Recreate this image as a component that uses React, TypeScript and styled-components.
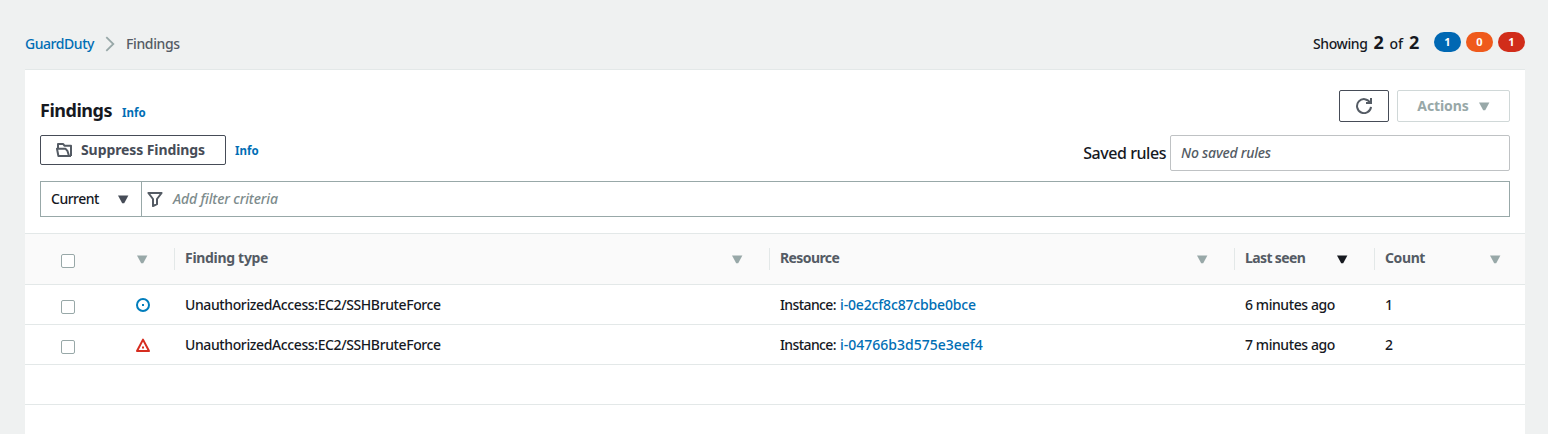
import React from "react";
import styled, { createGlobalStyle } from "styled-components";

const colors = {
  page: "#eff1f1",
  panel: "#ffffff",
  line: "#e3e8e8",
  head: "#fafafa",
  text: "#16191f",
  muted: "#545b64",
  button: "#464c57",
  grey: "#98a8a8",
  disabled: "#d0d8d8",
  link: "#006eb5",
};

const GlobalStyle = createGlobalStyle`
  *, *::before, *::after { box-sizing: border-box; }
  body {
    margin: 0;
    background: ${colors.page};
    color: ${colors.text};
    font-family: "Noto Sans", "Open Sans", sans-serif;
    font-size: 14px;
    font-weight: 500;
    line-height: 20px;
  }
`;

const Page = styled.div`
  display: flex;
  flex-direction: column;
  height: 434px;
  padding: 0 23px 0 25px;
  overflow: hidden;
`;

const TopBar = styled.header`
  display: flex;
  align-items: flex-start;
  justify-content: space-between;
  height: 69px;
  flex: none;
`;

const Breadcrumbs = styled.nav`
  display: flex;
  align-items: center;
  height: 20px;
  margin-top: 34px;
`;

const Text = styled.span<{ $track?: number; $color?: string; $bold?: boolean; $italic?: boolean; $size?: number }>`
  white-space: nowrap;
  letter-spacing: ${(p) => p.$track ?? 0}px;
  color: ${(p) => p.$color ?? colors.text};
  font-weight: ${(p) => (p.$bold ? 700 : 500)};
  font-style: ${(p) => (p.$italic ? "italic" : "normal")};
  font-size: ${(p) => p.$size ?? 14}px;
`;

const Link = styled.a<{ $track?: number }>`
  color: ${colors.link};
  white-space: nowrap;
  letter-spacing: ${(p) => p.$track ?? 0}px;
`;

const InfoLink = styled(Link)`
  font-size: 11.5px;
  font-weight: 700;
`;

const Chevron = styled.svg`
  width: 10px;
  height: 16px;
  margin: 0 11px 0 11px;
`;

const Summary = styled.div`
  display: flex;
  align-items: center;
  height: 20px;
  margin-top: 32px;
`;

const Total = styled.div`
  display: flex;
  align-items: baseline;
  width: 116px;
  height: 24px;
  line-height: 24px;
`;

const TotalNumber = styled.b`
  width: 10px;
  margin: 0 6px;
  font-size: 18px;
  letter-spacing: -0.3px;
`;

const Badge = styled.span<{ $color: string }>`
  display: flex;
  align-items: center;
  justify-content: center;
  width: 27px;
  height: 20px;
  margin-left: 5px;
  border-radius: 10px;
  background: ${(p) => p.$color};
  color: #fff;
  font-size: 11px;
  font-weight: 700;
  line-height: 20px;
`;

const Panel = styled.main`
  flex: 1;
  border-top: 1px solid ${colors.line};
  background: ${colors.panel};
`;

const Controls = styled.section`
  display: flex;
  flex-direction: column;
  height: 163px;
  padding: 20px 15px 0;
`;

const TitleRow = styled.div`
  display: flex;
  justify-content: space-between;
  height: 45px;
`;

const Title = styled.h1`
  margin: 0;
  font-size: 18px;
  font-weight: 700;
  line-height: 24px;
  letter-spacing: -0.48px;
`;

const TitleGroup = styled.div`
  display: flex;
  align-items: baseline;
  gap: 10px;
  padding-top: 8px;
`;

const ButtonGroup = styled.div`
  display: flex;
  gap: 8px;
`;

const Button = styled.button<{ $width: number; $height: number; $gap?: number; $disabled?: boolean }>`
  display: flex;
  align-items: center;
  justify-content: center;
  gap: ${(p) => p.$gap ?? 0}px;
  width: ${(p) => p.$width}px;
  height: ${(p) => p.$height}px;
  padding: 0;
  border: 1px solid ${(p) => (p.$disabled ? colors.disabled : colors.button)};
  border-radius: 2px;
  background: #fff;
  font: 700 14px/20px "Noto Sans", sans-serif;
`;

const SuppressButton = styled(Button)`
  justify-content: flex-start;
  padding-left: 15px;
`;

const Caret = styled.svg<{ $color: string }>`
  display: block;
  flex: none;
  width: 11px;
  height: 9px;
  fill: ${(p) => p.$color};
`;

const RulesRow = styled.div`
  display: flex;
  justify-content: space-between;
  height: 46px;
`;

const SuppressGroup = styled.div`
  display: flex;
  align-items: center;
  gap: 9px;
  height: 30px;

  ${InfoLink} {
    padding-top: 2px;
  }
`;

const SavedRules = styled.label`
  display: flex;
  align-items: center;
  gap: 4px;
  height: 36px;
`;

const RulesBox = styled.div`
  display: flex;
  align-items: center;
  width: 340px;
  height: 36px;
  padding: 0 10px;
  border: 1px solid #bfc2c4;
  border-radius: 2px;
`;

const FilterBar = styled.div`
  display: flex;
  height: 36px;
  border: 1px solid ${colors.grey};
`;

const FilterScope = styled.div`
  display: flex;
  align-items: center;
  justify-content: space-between;
  width: 101px;
  padding: 0 12px 0 10px;
  border-right: 1px solid ${colors.grey};
`;

const FilterInput = styled.div`
  display: flex;
  align-items: center;
  gap: 10px;
  flex: 1;
  padding-left: 5px;
`;

const Icon = styled.svg`
  display: block;
  flex: none;
  width: 16px;
  height: 16px;
  fill: none;
  stroke: ${colors.muted};
  stroke-width: 2;
`;

const Row = styled.div<{ $head?: boolean }>`
  display: grid;
  grid-template-columns: 85px 65px 595px 465px 140px 1fr;
  height: ${(p) => (p.$head ? 52 : 40)}px;
  border-bottom: 1px solid ${colors.line};
  ${(p) => p.$head && `background: ${colors.head}; border-top: 1px solid ${colors.line};`}
`;

const HeadCell = styled.div<{ $gap?: number }>`
  display: flex;
  align-items: center;
  justify-content: space-between;
  height: 22px;
  margin-top: 14px;
  padding: 0 ${(p) => p.$gap ?? 26}px 0 10px;
  border-right: 1px solid ${colors.line};

  &:last-child { border-right: 0; }
  ${Text} { padding-bottom: 2px; }
`;

const CheckCell = styled.div<{ $top: number }>`
  padding: ${(p) => p.$top}px 0 0 36px;
`;

const Checkbox = styled.span`
  display: block;
  width: 14px;
  height: 14px;
  border: 1px solid ${colors.grey};
  border-radius: 2px;
  background: #fff;
`;

const Cell = styled.div`
  display: flex;
  align-items: center;
  gap: 4px;
  padding: 1px 0 0 10px;
`;

const SeverityCell = styled.div`
  display: flex;
  align-items: center;
  padding-left: 25px;
`;

function DownCaret({ color = colors.grey }: { color?: string }) {
  return (
    <Caret viewBox="0 0 11 9" $color={color}>
      <path d="M0 .4h10.4L6.2 8.2H4.2z" />
    </Caret>
  );
}

function LowSeverity() {
  return (
    <Icon viewBox="0 0 16 16">
      <circle cx="8" cy="8" r="6" stroke="#007dbc" />
      <rect x="7" y="7" width="2" height="2" fill="#007dbc" stroke="none" />
    </Icon>
  );
}

function HighSeverity() {
  return (
    <Icon viewBox="0 0 16 16">
      <path d="M8 2.6 14 14H2z" stroke="#d62d20" strokeLinejoin="round" />
      <rect x="7" y="9.5" width="2" height="2" fill="#d62d20" stroke="none" />
    </Icon>
  );
}

const findings = [
  { severity: "low", id: "i-0e2cf8c87cbbe0bce", track: -0.16, seen: "6 minutes ago", count: 1 },
  { severity: "high", id: "i-04766b3d575e3eef4", track: 0, seen: "7 minutes ago", count: 2 },
];

export default function App() {
  return (
    <>
      <GlobalStyle />
      <Page>
        <TopBar>
          <Breadcrumbs>
            <Link $track={-0.45}>GuardDuty</Link>
            <Chevron viewBox="0 0 10 16" fill="none" stroke={colors.grey} strokeWidth="1.8">
              <path d="M1.3 1.2 8.3 8l-7 6.8" />
            </Chevron>
            <Text $color={colors.muted} $track={-0.37}>Findings</Text>
          </Breadcrumbs>
          <Summary>
            <Total>
              <Text $track={-0.4}>Showing</Text>
              <TotalNumber>2</TotalNumber>
              <Text>of</Text>
              <TotalNumber>2</TotalNumber>
            </Total>
            <Badge $color="#0068b3">1</Badge>
            <Badge $color="#ef5a1c">0</Badge>
            <Badge $color="#d12d1a">1</Badge>
          </Summary>
        </TopBar>
        <Panel>
          <Controls>
            <TitleRow>
              <TitleGroup>
                <Title>Findings</Title>
                <InfoLink>Info</InfoLink>
              </TitleGroup>
              <ButtonGroup>
                <Button $width={50} $height={32} aria-label="Refresh">
                  <Icon viewBox="0 0 16 16">
                    <path d="M15 8.8A7 7 0 1 1 14.1 4.6M15 0v5H10" />
                  </Icon>
                </Button>
                <Button $width={113} $height={32} $gap={10} $disabled>
                  <Text $bold $color={colors.grey} $track={-0.1}>Actions</Text>
                  <DownCaret />
                </Button>
              </ButtonGroup>
            </TitleRow>
            <RulesRow>
              <SuppressGroup>
                <SuppressButton $width={186} $height={30} $gap={9}>
                  <Icon viewBox="0 0 16 16">
                    <path d="M2 6V2h5.2l1.2 1.7H15V14M1 6.8h8.6l1.8 2L13 14H2.4zM13 14h2" strokeLinejoin="round" />
                  </Icon>
                  <Text $bold $color={colors.button} $track={-0.09}>Suppress Findings</Text>
                </SuppressButton>
                <InfoLink>Info</InfoLink>
              </SuppressGroup>
              <SavedRules>
                <Text $size={16} $track={-0.45}>Saved rules</Text>
                <RulesBox>
                  <Text $italic $color={colors.muted} $track={-0.22}>No saved rules</Text>
                </RulesBox>
              </SavedRules>
            </RulesRow>
            <FilterBar>
              <FilterScope>
                <Text $track={-0.5}>Current</Text>
                <DownCaret color={colors.button} />
              </FilterScope>
              <FilterInput>
                <Icon viewBox="0 0 16 16">
                  <path d="M1.4 2h13.2L10 8v5.2L6 15V8z" strokeLinejoin="round" />
                </Icon>
                <Text $italic $color="#7d8b8c" $track={-0.14}>Add filter criteria</Text>
              </FilterInput>
            </FilterBar>
          </Controls>
          <Row $head>
            <CheckCell $top={20}><Checkbox /></CheckCell>
            <HeadCell><span /><DownCaret /></HeadCell>
            <HeadCell><Text $bold $color={colors.muted} $track={-0.31}>Finding type</Text><DownCaret /></HeadCell>
            <HeadCell><Text $bold $color={colors.muted} $track={-0.6}>Resource</Text><DownCaret /></HeadCell>
            <HeadCell><Text $bold $color={colors.muted} $track={-0.62}>Last seen</Text><DownCaret color={colors.text} /></HeadCell>
            <HeadCell $gap={24}><Text $bold $color={colors.muted} $track={-0.4}>Count</Text><DownCaret /></HeadCell>
          </Row>
          {findings.map((f) => (
            <Row key={f.id}>
              <CheckCell $top={15}><Checkbox /></CheckCell>
              <SeverityCell>{f.severity === "low" ? <LowSeverity /> : <HighSeverity />}</SeverityCell>
              <Cell><Text $track={-0.39}>UnauthorizedAccess:EC2/SSHBruteForce</Text></Cell>
              <Cell>
                <Text $track={-0.6}>Instance:</Text>
                <Link $track={f.track}>{f.id}</Link>
              </Cell>
              <Cell><Text $track={-0.42}>{f.seen}</Text></Cell>
              <Cell><Text>{f.count}</Text></Cell>
            </Row>
          ))}
          <Row />
        </Panel>
      </Page>
    </>
  );
}
